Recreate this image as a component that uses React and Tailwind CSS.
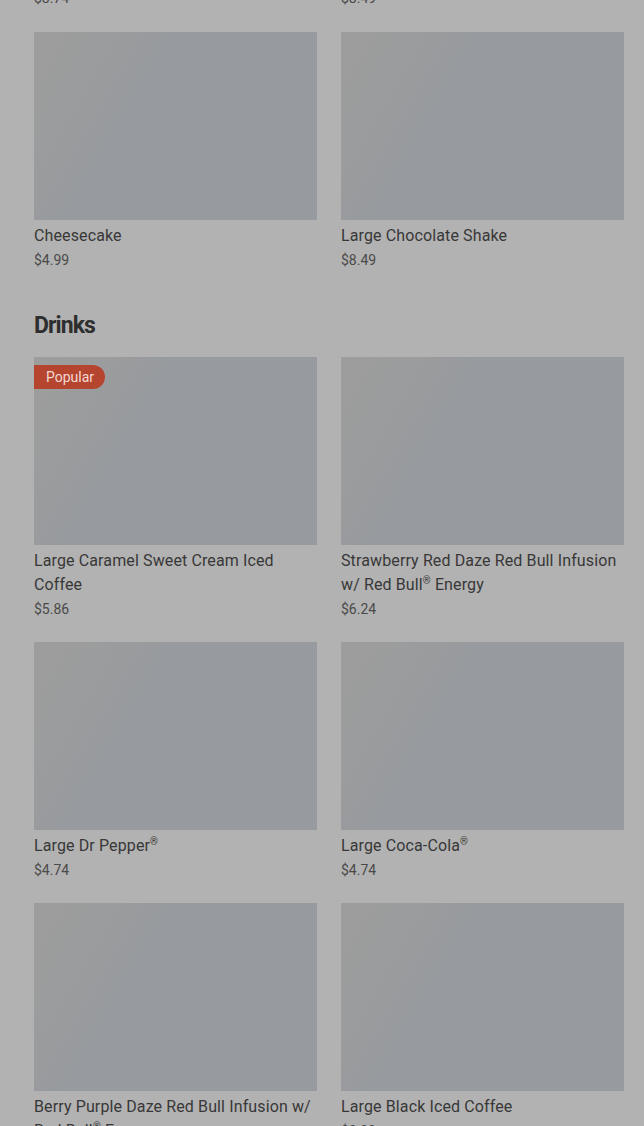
import React from "react";

const font = { fontFamily: "Roboto, 'Noto Sans', sans-serif" };

function Name({ text }) {
  const parts = text.split("®");
  return (
    <>
      {parts.map((p, i) => (
        <React.Fragment key={i}>
          {p}
          {i < parts.length - 1 && <sup className="relative -top-[6px] text-[10px] leading-none">®</sup>}
        </React.Fragment>
      ))}
    </>
  );
}

function Card({ name, price, popular }) {
  return (
    <div className="flex flex-col">
      <div className="relative h-[188px] w-full bg-[linear-gradient(120deg,#9d9d9d_0%,#9b9c9d_18%,#979a9e_35%,#979a9e_100%)]">
        {popular && (
          <span className="absolute left-0 top-2 rounded-r-full bg-[#b5452f] pl-3 pr-[11px] text-[14px] leading-6 text-[#f3d9d3]">
            Popular
          </span>
        )}
      </div>
      <div className="mt-[4px] text-[16px] leading-6 tracking-[0.12px] text-[#383838]">
        <Name text={name} />
      </div>
      <div className="mt-[2px] text-[14px] leading-5 text-[#4a4a4a]">{price}</div>
    </div>
  );
}

export default function App() {
  return (
    <div style={font} className="min-h-[1126px] w-full overflow-hidden bg-[#b2b2b2] pl-[34px] pr-[20px]">
      <div className="-mt-[12px] grid grid-cols-2 gap-x-6 text-[14px] leading-5 text-[#4a4a4a]">
        <div>$8.74</div>
        <div>$8.49</div>
      </div>
      <div className="mt-6 grid grid-cols-2 gap-x-6 gap-y-6">
        <Card name="Cheesecake" price="$4.99" />
        <Card name="Large Chocolate Shake" price="$8.49" />
      </div>
      <h2 className="mt-[40px] mb-[15px] text-[23px] font-bold leading-8 tracking-[-0.04em] text-[#2e2e2e]">Drinks</h2>
      <div className="grid grid-cols-2 gap-x-6 gap-y-[23px]">
        <Card name="Large Caramel Sweet Cream Iced Coffee" price="$5.86" popular />
        <Card name="Strawberry Red Daze Red Bull Infusion w/ Red Bull® Energy" price="$6.24" />
        <Card name="Large Dr Pepper®" price="$4.74" />
        <Card name="Large Coca-Cola®" price="$4.74" />
        <Card name="Berry Purple Daze Red Bull Infusion w/ Red Bull® Energy" price="$6.24" />
        <Card name="Large Black Iced Coffee" price="$3.99" />
      </div>
    </div>
  );
}
